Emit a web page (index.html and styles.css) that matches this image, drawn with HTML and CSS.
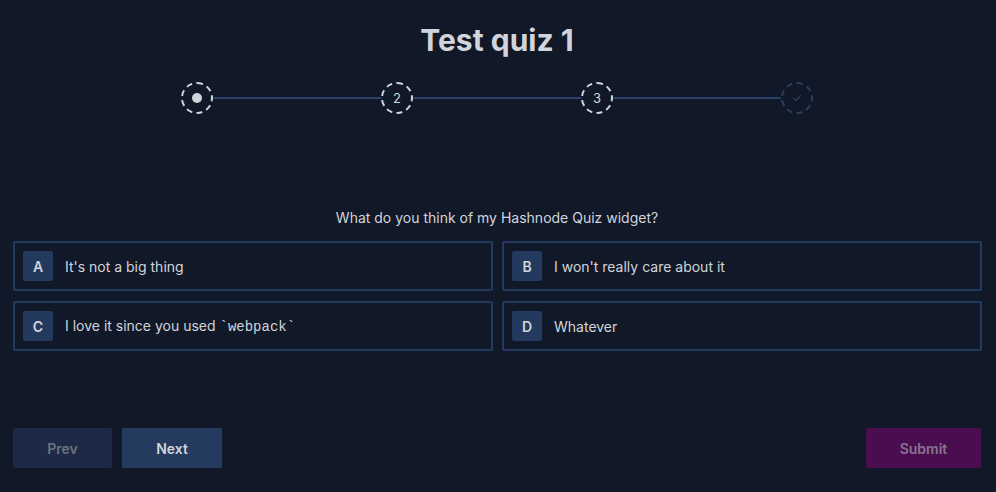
FILE: index.html
```html
<!DOCTYPE html>
<html lang="en">
<head>
<meta charset="utf-8">
<title>Test quiz 1</title>
<link rel="stylesheet" href="styles.css">
</head>
<body>
<div class="quiz">
  <h1 class="title">Test quiz 1</h1>
  <div class="stepper">
    <div class="step active"><span class="dot"></span></div>
    <div class="line"></div>
    <div class="step">2</div>
    <div class="line"></div>
    <div class="step">3</div>
    <div class="line"></div>
    <div class="step done">
      <svg width="12" height="12" viewBox="0 0 12 12"><path d="M2.5 6.2 L5 8.5 L9.5 3.8" fill="none" stroke="#2b3f5e" stroke-width="1.3" stroke-linecap="round" stroke-linejoin="round"/></svg>
    </div>
  </div>
  <p class="question">What do you think of my Hashnode Quiz widget?</p>
  <div class="options">
    <div class="option"><span class="badge">A</span><span class="label">It's not a big thing</span></div>
    <div class="option"><span class="badge">B</span><span class="label">I won't really care about it</span></div>
    <div class="option"><span class="badge">C</span><span class="label">I love it since you used <code>`webpack`</code></span></div>
    <div class="option"><span class="badge">D</span><span class="label">Whatever</span></div>
  </div>
  <div class="actions">
    <div class="nav">
      <button class="btn prev">Prev</button>
      <button class="btn next">Next</button>
    </div>
    <button class="btn submit">Submit</button>
  </div>
</div>
</body>
</html>
```
FILE: styles.css
```css
html, body {
  margin: 0;
  padding: 0;
  background: #111827;
  height: 100%;
}
body {
  font-family: Inter, "Noto Sans", sans-serif;
  color: #d1d5db;
}
.quiz {
  width: 968px;
  margin-left: 13px;
  padding-top: 22px;
}
.title {
  margin: 0;
  text-align: center;
  font-size: 30px;
  line-height: 36px;
  font-weight: 700;
  color: #d1d5db;
}
.stepper {
  display: flex;
  align-items: center;
  width: 632px;
  margin: 24px auto 0;
}
.step {
  width: 32px;
  height: 32px;
  box-sizing: border-box;
  border: 2px dashed #d1d5db;
  border-radius: 50%;
  display: flex;
  align-items: center;
  justify-content: center;
  font-size: 13px;
  color: #d1d5db;
  flex: none;
}
.step.done {
  border-color: #2b3f5e;
}
.dot {
  width: 10px;
  height: 10px;
  border-radius: 50%;
  background: #d1d5db;
}
.line {
  flex: 1;
  height: 2px;
  background: #2b4168;
}
.question {
  margin: 94px 0 0;
  text-align: center;
  font-size: 14px;
  line-height: 20px;
}
.options {
  display: grid;
  grid-template-columns: 480px 480px;
  column-gap: 9px;
  row-gap: 10px;
  margin-top: 13px;
}
.option {
  display: flex;
  align-items: center;
  height: 50px;
  box-sizing: border-box;
  border: 2px solid #223a5e;
  border-radius: 2px;
  padding: 8px;
}
.badge {
  width: 30px;
  height: 30px;
  display: flex;
  align-items: center;
  justify-content: center;
  background: #233a5e;
  border-radius: 2px;
  font-size: 14px;
  font-weight: 600;
  color: #d1d5db;
  flex: none;
}
.label {
  margin-left: 12px;
  font-size: 14px;
  color: #d1d5db;
}
code {
  font-family: "Liberation Mono", "DejaVu Sans Mono", monospace;
  font-size: 14px;
}
.actions {
  display: flex;
  justify-content: space-between;
  margin-top: 77px;
}
.nav {
  display: flex;
  gap: 10px;
}
.btn {
  height: 40px;
  border: none;
  border-radius: 2px;
  font-family: Inter, "Noto Sans", sans-serif;
  font-size: 14px;
  font-weight: 600;
  padding: 0;
}
.prev {
  width: 99px;
  background: #1c2a47;
  color: #6b7380;
}
.next {
  width: 100px;
  background: #243a5e;
  color: #d1d5db;
}
.submit {
  width: 115px;
  background: #4a0e50;
  color: #8a7392;
}
```
